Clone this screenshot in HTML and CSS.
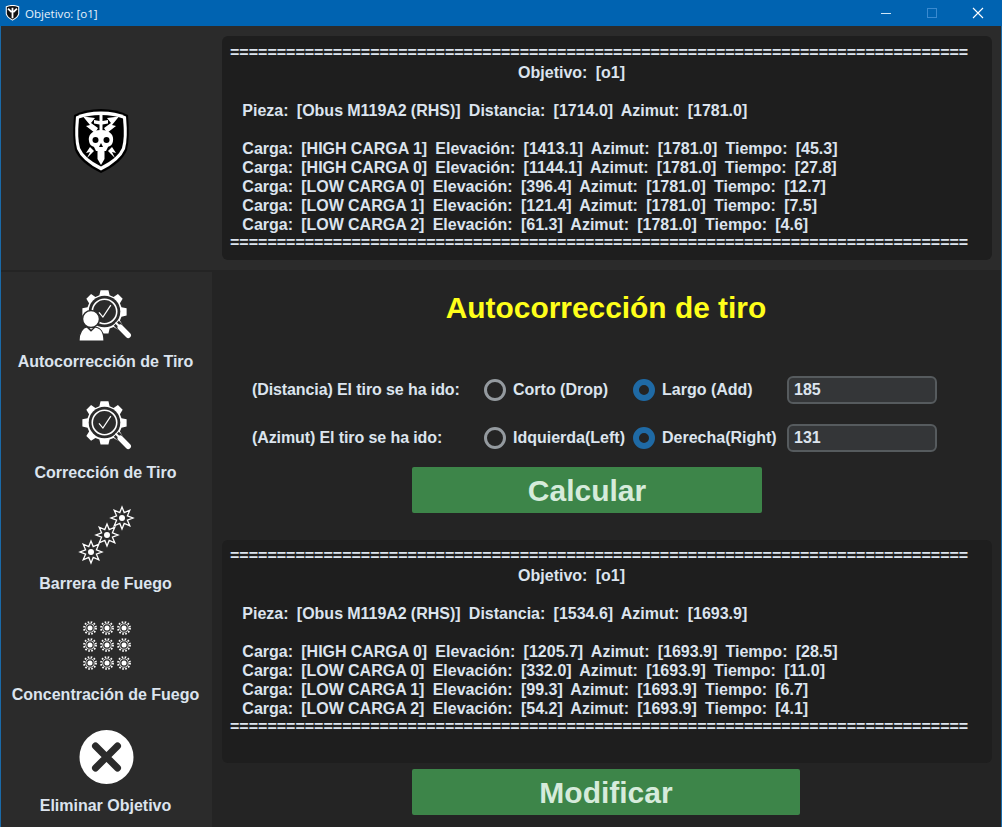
FILE: index.html
```html
<!DOCTYPE html>
<html lang="es">
<head>
    <meta charset="UTF-8">
    <title>Objetivo: [o1]</title>
    <link rel="stylesheet" href="styles.css">
</head>
<body>
    <svg class="defs" width="0" height="0">
        <defs>
            <path id="gear" d="M-5 -27 H5 L6.5 -20.5 L11.5 -18.5 L17 -22 L23 -16 L19.5 -10.5 L21.5 -5.5 L28 -4 V5 L21.5 6.5 L19.5 11.5 L23 17 L17 23 L11.5 19.5 L6.5 21.5 L5 28 H-5 L-6.5 21.5 L-11.5 19.5 L-17 23 L-23 17 L-19.5 11.5 L-21.5 6.5 L-28 5 V-4 L-21.5 -5.5 L-19.5 -10.5 L-23 -16 L-17 -22 L-11.5 -18.5 L-6.5 -20.5 Z"/>
            <g id="lens">
                <use href="#gear" fill="#fff"/>
                <circle r="20" fill="#2b2b2b"/>
                <circle r="15.5" fill="none" stroke="#fff" stroke-width="2"/>
                <path d="M-7 1 L-2 7 L8 -8" fill="none" stroke="#fff" stroke-width="1.6"/>
                <path d="M15 15 L22 22" stroke="#2b2b2b" stroke-width="9"/>
                <path d="M20 20 L30 30" stroke="#fff" stroke-width="7" stroke-linecap="round"/>
                <path d="M14 14 L20 20" stroke="#fff" stroke-width="2.5"/>
            </g>
            <g id="burst" fill="none" stroke="#fff" stroke-width="1.3">
                <path d="M0 -11 L2.2 -5.4 L7.8 -7.8 L5.4 -2.2 L11 0 L5.4 2.2 L7.8 7.8 L2.2 5.4 L0 11 L-2.2 5.4 L-7.8 7.8 L-5.4 2.2 L-11 0 L-5.4 -2.2 L-7.8 -7.8 L-2.2 -5.4 Z"/>
                <circle r="3" fill="#fff" stroke="none"/>
            </g>
            <g id="sun" fill="none" stroke="#fff">
                <circle r="6" stroke-width="1.8" stroke-dasharray="1.6 1.54"/>
                <circle r="4.3" stroke-width=".8"/>
                <circle r="2.5" fill="#fff" stroke="none"/>
            </g>
        </defs>
    </svg>

    <div class="window">
        <div class="titlebar">
            <svg class="app-icon" viewBox="0 0 16 18">
                <path d="M1 2 Q8 -1 15 2 V10 Q14 14 8 17 Q2 14 1 10 Z" fill="#111" stroke="#fff" stroke-width="1.2"/>
                <path d="M8 3 V15 M3 4 L7 8 M13 4 L9 8" stroke="#fff" stroke-width="2"/>
            </svg>
            <span class="title">Objetivo: [o1]</span>
            <div class="controls">
                <svg class="ctl" viewBox="0 0 46 26"><path d="M18 13.5 H28" stroke="#cfe6f7" stroke-width="1"/></svg>
                <svg class="ctl" viewBox="0 0 46 26"><rect x="18.5" y="8.5" width="9" height="9" fill="none" stroke="#3a8ad0"/></svg>
                <svg class="ctl" viewBox="0 0 46 26"><path d="M18 8 L28 18 M28 8 L18 18" stroke="#fff" stroke-width="1.1"/></svg>
            </div>
        </div>

        <div class="content">
            <div class="logo-frame">
                <svg class="logo" viewBox="0 0 58 66">
                    <path d="M29 1 Q45 1 56 7 Q58 30 55 42 Q50 55 29 65 Q8 55 3 42 Q0 30 2 7 Q13 1 29 1 Z" fill="#000"/>
                    <path d="M29 3.5 Q44 3.5 54 8.5 Q56 30 53 41 Q48 53 29 62.5 Q10 53 5 41 Q2 30 4 8.5 Q14 3.5 29 3.5 Z" fill="#fff"/>
                    <path d="M29 7 Q42 7 51 10.5 Q53 30 50 40 Q46 50 29 58.5 Q12 50 8 40 Q5 30 7 10.5 Q16 7 29 7 Z" fill="#000"/>
                    <path d="M11 8.500 L23 10 L19 15 L26 20 L23 25 L14 18 L18 17 Z M47 8.500 L35 10 L39 15 L32 20 L35 25 L44 18 L40 17 Z" fill="#fff"/>
                    <path d="M27.500 7 H30.500 V13 L36 12 V15.500 L30.500 16.500 V24 H27.500 V16.500 L22 15.500 V12 L27.500 13 Z" fill="#fff"/>
                    <path d="M29 22 C19 22 16 28 17 33 C17.500 37 20 38 22 39 L24 43 H34 L36 39 C38 38 40.500 37 41 33 C42 28 39 22 29 22 Z" fill="#fff"/>
                    <circle cx="23.500" cy="32" r="3" fill="#000"/>
                    <circle cx="34.500" cy="32" r="3" fill="#000"/>
                    <path d="M29 35 L27 39 H31 Z" fill="#000"/>
                    <path d="M25.500 43 H32.500 V51 L29 57 L25.500 51 Z" fill="#fff"/>
                    <path d="M18 39 L14 45 L18 44 L15 50 L22 43 Z M40 39 L44 45 L40 44 L43 50 L36 43 Z" fill="#fff"/>
                </svg>
            </div>

            <div class="report-frame">
                <div class="report top-report">
                    <div class="rule">===============================================================================</div>
<pre class="lines">                                                                      Objetivo:  [o1]

   Pieza:  [Obus M119A2 (RHS)]  Distancia:  [1714.0]  Azimut:  [1781.0]

   Carga:  [HIGH CARGA 1]  Elevación:  [1413.1]  Azimut:  [1781.0]  Tiempo:  [45.3]
   Carga:  [HIGH CARGA 0]  Elevación:  [1144.1]  Azimut:  [1781.0]  Tiempo:  [27.8]
   Carga:  [LOW CARGA 0]  Elevación:  [396.4]  Azimut:  [1781.0]  Tiempo:  [12.7]
   Carga:  [LOW CARGA 1]  Elevación:  [121.4]  Azimut:  [1781.0]  Tiempo:  [7.5]
   Carga:  [LOW CARGA 2]  Elevación:  [61.3]  Azimut:  [1781.0]  Tiempo:  [4.6]</pre>
                    <div class="rule end">===============================================================================</div>
                </div>
            </div>

            <nav class="sidebar">
                <div class="nav-item">
                    <svg class="nav-icon" viewBox="0 0 60 56">
                        <use href="#lens" transform="translate(27.5 22.500) scale(.79)"/>
                        <circle cx="14" cy="30" r="8.500" fill="#fff" stroke="#2b2b2b" stroke-width="1.500"/>
                        <path d="M2 52 C2 43 6 38.500 10 38 L14 42 L18 38 C23 38.500 27 43 27 52 Z" fill="#fff" stroke="#2b2b2b" stroke-width="1.200"/>
                    </svg>
                    <span>Autocorrección de Tiro</span>
                </div>
                <div class="nav-item">
                    <svg class="nav-icon" viewBox="0 0 60 56">
                        <use href="#lens" transform="translate(27.5 22.500) scale(.79)"/>
                    </svg>
                    <span>Corrección de Tiro</span>
                </div>
                <div class="nav-item">
                    <svg class="nav-icon" viewBox="0 0 60 56">
                        <use href="#burst" transform="translate(45 7)"/>
                        <use href="#burst" transform="translate(30 24)"/>
                        <use href="#burst" transform="translate(14 41)"/>
                    </svg>
                    <span>Barrera de Fuego</span>
                </div>
                <div class="nav-item">
                    <svg class="nav-icon" viewBox="0 0 60 56">
                        <use href="#sun" transform="translate(13 6)"/>
                        <use href="#sun" transform="translate(30 6)"/>
                        <use href="#sun" transform="translate(47 6)"/>
                        <use href="#sun" transform="translate(13 23)"/>
                        <use href="#sun" transform="translate(30 23)"/>
                        <use href="#sun" transform="translate(47 23)"/>
                        <use href="#sun" transform="translate(13 41)"/>
                        <use href="#sun" transform="translate(30 41)"/>
                        <use href="#sun" transform="translate(47 41)"/>
                    </svg>
                    <span>Concentración de Fuego</span>
                </div>
                <div class="nav-item">
                    <svg class="nav-icon" viewBox="0 0 60 56">
                        <circle cx="29.500" cy="24" r="27" fill="#fff"/>
                        <path d="M18.500 13 L40.500 35 M40.500 13 L18.500 35" stroke="#2b2b2b" stroke-width="7" stroke-linecap="round"/>
                    </svg>
                    <span>Eliminar Objetivo</span>
                </div>
            </nav>

            <main class="main">
                <h1 class="heading">Autocorrección de tiro</h1>

                <div class="form-row">
                    <span class="row-label">(Distancia) El tiro se ha ido:</span>
                    <label class="radio"><i class="dot"></i>Corto (Drop)</label>
                    <label class="radio"><i class="dot on"></i>Largo (Add)</label>
                    <div class="entry">185</div>
                </div>
                <div class="form-row">
                    <span class="row-label">(Azimut) El tiro se ha ido:</span>
                    <label class="radio"><i class="dot"></i>Idquierda(Left)</label>
                    <label class="radio"><i class="dot on"></i>Derecha(Right)</label>
                    <div class="entry">131</div>
                </div>

                <button class="btn btn-calc">Calcular</button>

                <div class="report bottom-report">
                    <div class="rule">===============================================================================</div>
<pre class="lines">                                                                      Objetivo:  [o1]

   Pieza:  [Obus M119A2 (RHS)]  Distancia:  [1534.6]  Azimut:  [1693.9]

   Carga:  [HIGH CARGA 0]  Elevación:  [1205.7]  Azimut:  [1693.9]  Tiempo:  [28.5]
   Carga:  [LOW CARGA 0]  Elevación:  [332.0]  Azimut:  [1693.9]  Tiempo:  [11.0]
   Carga:  [LOW CARGA 1]  Elevación:  [99.3]  Azimut:  [1693.9]  Tiempo:  [6.7]
   Carga:  [LOW CARGA 2]  Elevación:  [54.2]  Azimut:  [1693.9]  Tiempo:  [4.1]</pre>
                    <div class="rule end">===============================================================================</div>
                </div>

                <button class="btn btn-mod">Modificar</button>
            </main>
        </div>
    </div>
</body>
</html>
```
FILE: styles.css
```css
* {
    margin: 0;
    padding: 0;
    box-sizing: border-box;
}

html, body {
    width: 100%;
    height: 100%;
    overflow: hidden;
}

body {
    font-family: "Liberation Sans", Arial, sans-serif;
    font-weight: bold;
    font-size: 16px;
    color: #dce4ee;
    background: #242424;
}

.defs {
    display: block;
    height: 0;
}

.window {
    height: 827px;
    display: flex;
    flex-direction: column;
    border: 1px solid #1a6aa8;
    border-top: none;
}

.titlebar {
    height: 26px;
    flex: none;
    margin: 0 -1px;
    display: flex;
    align-items: center;
    padding-left: 5px;
    background: #0063b1;
}

.app-icon {
    width: 15px;
    height: 16px;
    margin-right: 5px;
}

.title {
    font-family: "Open Sans", sans-serif;
    font-weight: normal;
    font-size: 11.6px;
    color: #e8f2fb;
}

.controls {
    margin-left: auto;
    display: flex;
    padding-right: 1px;
}

.ctl {
    width: 46px;
    height: 26px;
}

.content {
    flex: 1;
    min-height: 0;
    display: grid;
    grid-template-columns: 211px 1fr;
    grid-template-rows: 244px 1fr;
}

.logo-frame {
    background: #2b2b2b;
    display: flex;
    justify-content: center;
    padding: 82px 12px 0 0;
}

.logo {
    width: 58px;
    height: 66px;
}

.report-frame {
    background: #2b2b2b;
    padding: 10px 9px 10px 10px;
}

.report {
    line-height: 19px;
    overflow: hidden;
    background: #1e1e1e;
    border-radius: 6px;
    padding: 6px 8px;
}

.rule {
    white-space: pre;
    margin-bottom: 1px;
}

.rule.end {
    margin-top: -1px;
}

.lines {
    font: inherit;
    line-height: 19px;
    white-space: pre;
    word-spacing: -0.33px;
}

.top-report {
    height: 224px;
    padding-top: 7px;
}

.sidebar {
    background: #2b2b2b;
    margin-top: 2px;
    padding-top: 17px;
    display: flex;
    flex-direction: column;
}

.nav-item {
    height: 111px;
    padding-right: 2px;
    display: flex;
    flex-direction: column;
    align-items: center;
}

.nav-icon {
    width: 60px;
    height: 56px;
    margin-bottom: 8px;
    margin-left: 2px;
    overflow: visible;
}

.main {
    padding-left: 10px;
    padding-right: 9px;
    display: flex;
    flex-direction: column;
    background: #242424;
}

.heading {
    font-size: 29.9px;
    color: #ffff1a;
    text-align: center;
    margin-top: 20px;
    padding-right: 2px;
    line-height: 36px;
    margin-bottom: 50px;
}

.form-row {
    display: grid;
    grid-template-columns: 232px 149px 154px 150px;
    align-items: center;
    height: 28px;
    margin-left: 30px;
    margin-bottom: 20px;
}

.row-label {
    white-space: nowrap;
    letter-spacing: -0.1px;
}

.radio {
    display: flex;
    align-items: center;
    gap: 7px;
    white-space: nowrap;
}

.dot {
    width: 22px;
    height: 22px;
    border-radius: 50%;
    border: 3px solid #949a9f;
    flex: none;
}

.dot.on {
    border: 6px solid #1f6aa5;
}

.entry {
    height: 28px;
    border: 2px solid #565b5e;
    border-radius: 6px;
    background: #343638;
    padding-left: 5px;
    line-height: 24px;
}

.btn {
    border: none;
    background: #3d8549;
    color: #d6ebdb;
    font-family: inherit;
    font-weight: bold;
    font-size: 30px;
    height: 46px;
    padding-top: 2px;
    border-radius: 2px;
}

.btn-calc {
    width: 350px;
    margin: -5px 0 0 190px;
}

.bottom-report {
    height: 223px;
    margin-top: 27px;
}

.btn-mod {
    width: 388px;
    margin: 6px 0 0 190px;
}
```
